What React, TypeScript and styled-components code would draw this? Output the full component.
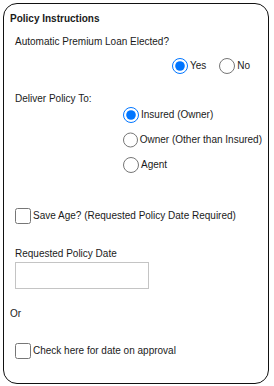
import React, { useState } from "react";
import styled, { createGlobalStyle } from "styled-components";

const GlobalStyle = createGlobalStyle`
    body {
        margin: 0;
        background: #fff;
        font-family: "Liberation Sans", Arial, sans-serif;
        color: #1a1a1a;
    }
`;

const Card = styled.div`
    margin: 3px;
    width: 266px;
    height: 381px;
    box-sizing: border-box;
    border: 1px solid #111;
    border-radius: 14px;
    padding: 8px 6px 0 6px;
    display: flex;
    flex-direction: column;
    font-size: 10px;
    line-height: 14px;
`;

const Title = styled.div`
    font-weight: bold;
`;

const Label = styled.div<{ $top: number; $indent?: number }>`
    margin-top: ${(p) => p.$top}px;
    margin-left: ${(p) => p.$indent ?? 0}px;
`;

const RadioRow = styled.div`
    margin-top: 9px;
    display: flex;
    justify-content: flex-end;
    gap: 13px;
    padding-right: 12px;
`;

const RadioList = styled.div`
    margin-top: 1px;
    margin-left: 113px;
    display: flex;
    flex-direction: column;
    gap: 9px;
`;

const Option = styled.label`
    display: flex;
    align-items: center;
    gap: 2px;
    height: 16px;
    white-space: nowrap;
    cursor: pointer;
`;

const Radio = styled.input.attrs({ type: "radio" })`
    width: 16px;
    height: 16px;
    margin: 0;
    accent-color: #0075ff;
`;

const CheckRow = styled.label<{ $top: number }>`
    margin-top: ${(p) => p.$top}px;
    margin-left: 5px;
    display: flex;
    align-items: center;
    gap: 2px;
    height: 16px;
`;

const Check = styled.input.attrs({ type: "checkbox" })`
    width: 16px;
    height: 16px;
    margin: 0;
`;

const DateInput = styled.input`
    margin-top: 1px;
    margin-left: 5px;
    width: 134px;
    height: 27px;
    box-sizing: border-box;
    border: 1px solid #c4c4c4;
    padding: 2px 4px;
    font: inherit;
    outline: none;
`;

export default function App() {
    const [loan, setLoan] = useState("yes");
    const [deliver, setDeliver] = useState("insured");
    const options = [
        { id: "insured", text: "Insured (Owner)" },
        { id: "owner", text: "Owner (Other than Insured)" },
        { id: "agent", text: "Agent" },
    ];
    return (
        <>
            <GlobalStyle />
            <Card>
                <Title>Policy Instructions</Title>
                <Label $top={9} $indent={5}>Automatic Premium Loan Elected?</Label>
                <RadioRow>
                    <Option>
                        <Radio name="loan" checked={loan === "yes"} onChange={() => setLoan("yes")} />
                        Yes
                    </Option>
                    <Option>
                        <Radio name="loan" checked={loan === "no"} onChange={() => setLoan("no")} />
                        No
                    </Option>
                </RadioRow>
                <Label $top={18} $indent={5}>Deliver Policy To:</Label>
                <RadioList>
                    {options.map((o) => (
                        <Option key={o.id}>
                            <Radio name="deliver" checked={deliver === o.id} onChange={() => setDeliver(o.id)} />
                            {o.text}
                        </Option>
                    ))}
                </RadioList>
                <CheckRow $top={35}>
                    <Check />
                    Save Age? (Requested Policy Date Required)
                </CheckRow>
                <Label $top={23} $indent={5}>Requested Policy Date</Label>
                <DateInput type="text" />
                <Label $top={18}>Or</Label>
                <CheckRow $top={22}>
                    <Check />
                    Check here for date on approval
                </CheckRow>
            </Card>
        </>
    );
}
